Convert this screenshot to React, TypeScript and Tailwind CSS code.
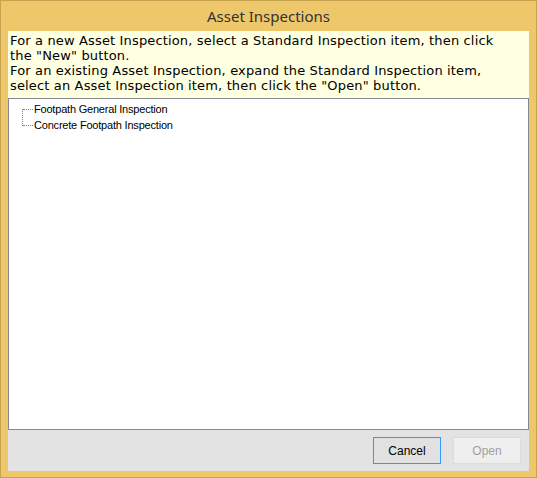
import React from "react";

export default function App() {
  return (
    <div className="w-[537px] h-[478px] bg-[#efc76b] border border-[#c5a34f] flex flex-col">
      <div className="h-[30px] flex items-center justify-center text-[15px] text-[#333333]" style={{ fontFamily: '"Noto Sans", "Open Sans", sans-serif' }}>
        Asset Inspections
      </div>
      <div className="mx-[7px] flex-1 mb-[6px] flex flex-col bg-[#e3e3e3]">
        <div
          className="h-[67px] bg-[#ffffe1] pl-[2px] pt-[2px] text-[13px] leading-[15px] text-black whitespace-nowrap tracking-[0.15px]"
          style={{ fontFamily: '"DejaVu Sans", Verdana, sans-serif' }}
        >
          For a new Asset Inspection, select a Standard Inspection item, then click
          <br />
          the "New" button.
          <br />
          For an existing Asset Inspection, expand the Standard Inspection item,
          <br />
          select an Asset Inspection item, then click the "Open" button.
        </div>
        <div className="h-[332px] bg-white border border-[#828790] relative text-[11px] text-black tracking-[-0.2px]" style={{ fontFamily: '"Liberation Sans", Arial, sans-serif' }}>
          <div className="absolute left-[13px] top-[10px] w-0 h-[17px] border-l border-dotted border-[#808080]" />
          <div className="flex flex-col pt-[2px]">
            <div className="flex items-center h-[16px]">
              <div className="ml-[14px] w-[10px] border-t border-dotted border-[#808080]" />
              <span className="ml-[1px]">Footpath General Inspection</span>
            </div>
            <div className="flex items-center h-[16px]">
              <div className="ml-[14px] w-[10px] border-t border-dotted border-[#808080]" />
              <span className="ml-[1px]">Concrete Footpath Inspection</span>
            </div>
          </div>
        </div>
        <div className="flex-1 flex items-center justify-end gap-[12px] pr-[8px] text-[12px]" style={{ fontFamily: '"Liberation Sans", Arial, sans-serif' }}>
          <button className="w-[68px] h-[27px] bg-[#e1e1e1] border border-[#3399ff] text-black">Cancel</button>
          <button className="w-[68px] h-[27px] bg-[#efefef] border border-[#dcdcdc] text-[#a0a0a0]">Open</button>
        </div>
      </div>
    </div>
  );
}
